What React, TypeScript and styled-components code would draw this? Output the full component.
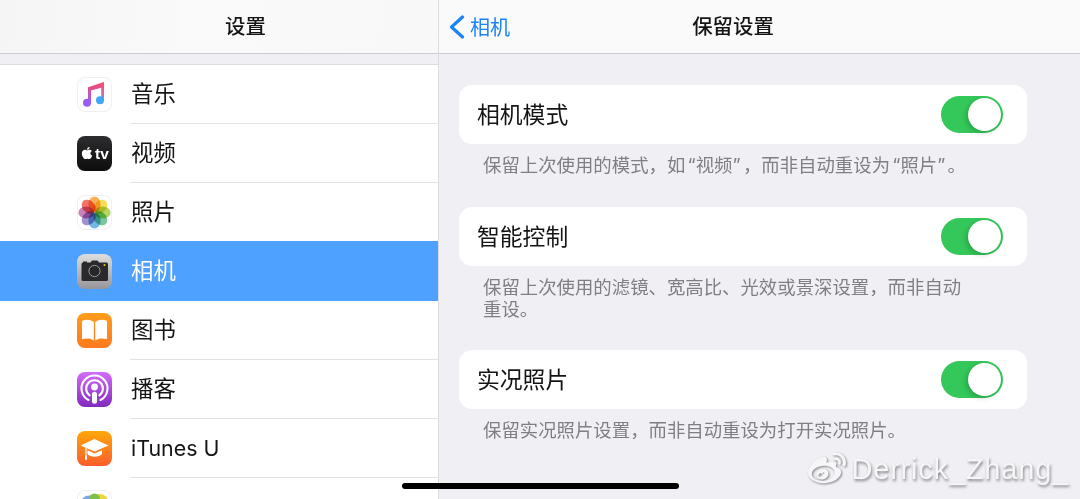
import React from "react";
import styled, { createGlobalStyle } from "styled-components";
import { FaApple, FaWeibo } from "react-icons/fa";

const Global = createGlobalStyle`
  html, body { margin: 0; padding: 0; height: 499px; overflow: hidden; background: #efeff4; }
  body { font-family: Inter, "Noto Sans CJK SC", sans-serif; color: #111; }
`;

const Screen = styled.div`
  position: relative;
  display: flex;
  width: 1080px;
  height: 499px;
  overflow: hidden;
  background: #efeff4;
`;
const Sidebar = styled.aside`
  width: 438px;
  flex: none;
  border-right: 1px solid #dcdcde;
  display: flex;
  flex-direction: column;
`;
const SideNav = styled.header`
  height: 53px;
  flex: none;
  padding-left: 53px;
  display: flex;
  align-items: center;
  justify-content: center;
  background: linear-gradient(100deg, #f5f5f6 0%, #fafafb 45%, #f8f8f9 100%);
  border-bottom: 1px solid #cdcdd0;
`;
const NavTitle = styled.h1`
  margin: 0;
  padding-top: 2px;
  font-size: 20.4px;
  font-weight: 500;
  line-height: 1;
  color: #141414;
`;
const List = styled.ul`
  list-style: none;
  margin: 10px 0 0;
  padding: 0;
  background: #fff;
  border-top: 1px solid #dedee0;
`;
const Row = styled.li<{ $selected?: boolean }>`
  height: ${p => (p.$selected ? 60 : 59)}px;
  margin-top: ${p => (p.$selected ? -1 : 0)}px;
  display: flex;
  align-items: center;
  padding-left: 77px;
  background: ${p => (p.$selected ? "#4ea1ff" : "#fff")};
  color: ${p => (p.$selected ? "#fff" : "#151515")};
`;
const Tile = styled.span<{ $bg: string; $outlined?: boolean }>`
  width: 35px;
  height: 35px;
  flex: none;
  border-radius: 8px;
  overflow: hidden;
  background: ${p => p.$bg};
  box-shadow: ${p => (p.$outlined ? "inset 0 0 0 1px #f0f0f0" : "none")};
  display: flex;
  align-items: center;
  justify-content: center;
  svg { display: block; }
`;
const Label = styled.span<{ $plain?: boolean; $latin?: boolean }>`
  flex: 1;
  align-self: stretch;
  margin-left: 18px;
  padding: 0 0 ${p => (p.$latin ? 0 : 4)}px 1px;
  display: flex;
  align-items: center;
  font-size: ${p => (p.$latin ? 21.4 : 22.4)}px;
  border-bottom: 1px solid ${p => (p.$plain ? "transparent" : "#e2e2e4")};
`;
const TvMark = styled.span`
  display: flex;
  align-items: center;
  gap: 1px;
  color: #fff;
  font-family: "Liberation Sans", sans-serif;
  font-size: 15.5px;
  font-weight: 700;
  line-height: 1;
  svg { margin-top: -2px; }
`;
const Petals = styled.svg`
  ellipse { mix-blend-mode: multiply; opacity: .85; }
`;
const Detail = styled.main`
  flex: 1;
  display: flex;
  flex-direction: column;
  min-width: 0;
`;
const DetailNav = styled.header`
  height: 53px;
  flex: none;
  padding-right: 53px;
  display: grid;
  grid-template-columns: 1fr auto 1fr;
  align-items: center;
  background: #fafafb;
  border-bottom: 1px solid #cdcdd0;
`;
const Back = styled.a`
  display: flex;
  align-items: center;
  gap: 5px;
  padding-left: 10px;
  color: #1b84f8;
  font-size: 20.1px;
  line-height: 1;
`;
const BackText = styled.span`
  padding-top: 3px;
`;
const Content = styled.div`
  padding: 31px 53px 0 20px;
`;
const Card = styled.div`
  height: 59px;
  padding: 0 24px 2px 18px;
  box-sizing: border-box;
  display: flex;
  align-items: center;
  justify-content: space-between;
  background: #fff;
  border-radius: 13px;
  font-size: 22.8px;
  color: #141414;
`;
const Toggle = styled.span`
  position: relative;
  width: 62px;
  height: 37px;
  margin-top: 2px;
  border-radius: 19px;
  background: #34c759;
`;
const Knob = styled.span`
  position: absolute;
  top: 2px;
  right: 2px;
  width: 33px;
  height: 33px;
  border-radius: 50%;
  background: #fff;
  box-shadow: -2px 2px 5px rgba(0,0,0,.18);
`;
const Note = styled.p`
  margin: 0;
  padding: 10px 0 30.5px 24px;
  max-width: 485px;
  font-size: 18.4px;
  line-height: 22px;
  color: #808084;
`;
const Quoted = styled.span`
  margin: 0 2.3px;
`;
const HomeBar = styled.div`
  position: absolute;
  left: 402px;
  bottom: 10px;
  width: 277px;
  height: 6px;
  border-radius: 3px;
  background: #000;
`;
const Watermark = styled.div`
  position: absolute;
  right: 11px;
  bottom: 11px;
  display: flex;
  align-items: center;
  gap: 5px;
  color: #f6f6f8;
  font-family: "Liberation Sans", sans-serif;
  font-size: 29px;
  letter-spacing: 0.8px;
  line-height: 33px;
  text-shadow: 1px 2px 3px rgba(0,0,0,.45);
  svg { filter: drop-shadow(1px 1px 1px rgba(0,0,0,.45)); }
`;

const MusicIcon = () => (
  <svg width="35" height="35" viewBox="0 0 35 35">
    <defs>
      <linearGradient id="mL" x1="0" y1="0" x2="0" y2="1">
        <stop offset="0" stopColor="#fb4a68" /><stop offset="1" stopColor="#9a5cf6" />
      </linearGradient>
      <linearGradient id="mR" x1="0" y1="0" x2="0" y2="1">
        <stop offset="0" stopColor="#fb4a68" /><stop offset=".55" stopColor="#d76aa8" /><stop offset="1" stopColor="#3fa6f8" />
      </linearGradient>
    </defs>
    <path d="M11 10.2 27 5V10L14 13.6V26.5H11Z" fill="url(#mL)" />
    <circle cx="10" cy="25.8" r="4" fill="#9a5cf6" />
    <path d="M24.2 7h2.8v17h-2.8Z" fill="url(#mR)" />
    <circle cx="23" cy="23.3" r="4" fill="#3fa6f8" />
  </svg>
);
const PHOTO = ["#f9a23c", "#f3d93a", "#a6cf4a", "#5fbf8a", "#5aa9dc", "#8f7fc4", "#c46bb0", "#ee5b4f"];
const PhotosIcon = () => (
  <Petals width="35" height="35" viewBox="0 0 35 35">
    {PHOTO.map((c, i) => (
      <ellipse key={c} cx="17.5" cy="9.3" rx="6.1" ry="7.9" fill={c} transform={`rotate(${i * 45} 17.5 17.5)`} />
    ))}
  </Petals>
);
const CameraIcon = () => (
  <svg width="35" height="35" viewBox="0 0 35 35">
    <path d="M6 8.5V7.5h4v1h3.5l1.5-2h5.5l1.5 2h7.5a1.5 1.5 0 0 1 1.5 1.5v15.5a1.5 1.5 0 0 1-1.5 1.5H6a1.5 1.5 0 0 1-1.5-1.5V10A1.5 1.5 0 0 1 6 8.5Z" fill="#2a2a2c" />
    <circle cx="17.5" cy="17" r="5.6" fill="#262628" stroke="#b5b5b5" strokeWidth=".8" />
    <circle cx="27.5" cy="11" r="1" fill="#f4c430" />
  </svg>
);
const BooksIcon = () => (
  <svg width="35" height="35" viewBox="0 0 35 35">
    <path d="M16.8 9C14 6.6 9 6.3 6.4 7.3 5.3 7.7 5 8.4 5 9.5V26C9 25 14 25 16.8 27.6Z" fill="#fff" />
    <path d="M18.2 9C21 6.6 26 6.3 28.6 7.3 29.7 7.7 30 8.4 30 9.5V26C26 25 21 25 18.2 27.6Z" fill="#fff" />
  </svg>
);
const PodcastIcon = () => (
  <svg width="35" height="35" viewBox="0 0 35 35" fill="none" stroke="#fff" strokeLinecap="round">
    <path d="M11.5 28A13 13 0 1 1 23.5 28" strokeWidth="2.1" />
    <path d="M12.6 23.4A8.4 8.4 0 1 1 22.4 23.4" strokeWidth="2.1" />
    <circle cx="17.5" cy="15" r="3.4" fill="#fff" stroke="none" />
    <rect x="15" y="19.8" width="5" height="12" rx="2.5" fill="#fff" stroke="none" />
  </svg>
);
const CapIcon = () => (
  <svg width="35" height="35" viewBox="0 0 35 35">
    <path d="M17.5 8 31.5 14.5 17.5 20.5 3.5 14.5Z" fill="#fff" />
    <path d="M10.5 19.2 17.5 22.5 25 19.2V23C22 26.5 13.5 26.5 10.5 23Z" fill="#fff" />
    <path d="M9 16.5V24" stroke="#fff" strokeWidth="1.2" />
    <rect x="8" y="24" width="2" height="5" rx="1" fill="#fff" />
  </svg>
);
const GameIcon = () => (
  <svg width="35" height="35" viewBox="0 0 35 35">
    <circle cx="12" cy="14" r="8.5" fill="#7fa6e8" />
    <circle cx="23" cy="12" r="8" fill="#e6d83a" />
    <circle cx="17.5" cy="9" r="5.5" fill="#7fc04a" />
    <circle cx="17" cy="24" r="8" fill="#ec6a8c" />
  </svg>
);
const Chevron = () => (
  <svg width="16" height="24" viewBox="0 0 16 24" fill="none" stroke="#1b84f8" strokeWidth="3.2" strokeLinecap="round" strokeLinejoin="round">
    <path d="M13.5 2 2.5 12l11 10" />
  </svg>
);

const rows = [
  { name: "音乐", bg: "#fff", outlined: true, icon: <MusicIcon /> },
  { name: "视频", bg: "linear-gradient(#2d2d2f,#0d0d0e)", icon: <TvMark><FaApple size={14} />tv</TvMark> },
  { name: "照片", bg: "#fff", outlined: true, plain: true, icon: <PhotosIcon /> },
  { name: "相机", bg: "linear-gradient(#dedede,#97979b)", selected: true, plain: true, icon: <CameraIcon /> },
  { name: "图书", bg: "linear-gradient(#ff9d1c,#fc7a1e)", icon: <BooksIcon /> },
  { name: "播客", bg: "linear-gradient(#d36cf8,#812bbd)", icon: <PodcastIcon /> },
  { name: "iTunes U", bg: "linear-gradient(#ffa80a,#fb5c2b)", latin: true, icon: <CapIcon /> },
  { name: "", bg: "#fff", outlined: true, plain: true, icon: <GameIcon /> },
];

const sections = [
  { title: "相机模式", note: <>保留上次使用的模式，如<Quoted>“视频”</Quoted>，而非自动重设为<Quoted>“照片”</Quoted>。</> },
  { title: "智能控制", note: "保留上次使用的滤镜、宽高比、光效或景深设置，而非自动重设。" },
  { title: "实况照片", note: "保留实况照片设置，而非自动重设为打开实况照片。" },
];

export default function App() {
  return (
    <Screen>
      <Global />
      <Sidebar>
        <SideNav><NavTitle>设置</NavTitle></SideNav>
        <List>
          {rows.map((r, i) => (
            <Row key={i} $selected={r.selected}>
              <Tile $bg={r.bg} $outlined={r.outlined}>{r.icon}</Tile>
              <Label $plain={r.plain} $latin={r.latin}>{r.name}</Label>
            </Row>
          ))}
        </List>
      </Sidebar>
      <Detail>
        <DetailNav>
          <Back><Chevron /><BackText>相机</BackText></Back>
          <NavTitle>保留设置</NavTitle>
        </DetailNav>
        <Content>
          {sections.map(s => (
            <section key={s.title}>
              <Card>{s.title}<Toggle><Knob /></Toggle></Card>
              <Note>{s.note}</Note>
            </section>
          ))}
        </Content>
      </Detail>
      <HomeBar />
      <Watermark><FaWeibo size={38} />Derrick_Zhang_</Watermark>
    </Screen>
  );
}
